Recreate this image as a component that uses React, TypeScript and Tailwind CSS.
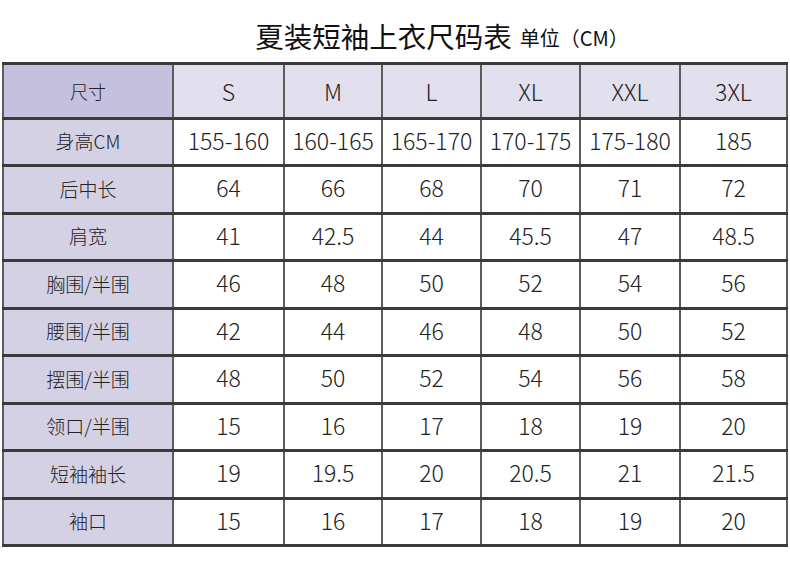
import React from 'react';

const sizes = ['S', 'M', 'L', 'XL', 'XXL', '3XL'];

const rows: [string, string[]][] = [
  ['身高CM', ['155-160', '160-165', '165-170', '170-175', '175-180', '185']],
  ['后中长', ['64', '66', '68', '70', '71', '72']],
  ['肩宽', ['41', '42.5', '44', '45.5', '47', '48.5']],
  ['胸围/半围', ['46', '48', '50', '52', '54', '56']],
  ['腰围/半围', ['42', '44', '46', '48', '50', '52']],
  ['摆围/半围', ['48', '50', '52', '54', '56', '58']],
  ['领口/半围', ['15', '16', '17', '18', '19', '20']],
  ['短袖袖长', ['19', '19.5', '20', '20.5', '21', '21.5']],
  ['袖口', ['15', '16', '17', '18', '19', '20']],
];

const colWidths = ['w-[170px]', 'w-[111px]', 'w-[98px]', 'w-[99px]', 'w-[99px]', 'w-[100px]', 'w-[107px]'];

export default function App() {
  return (
    <div
      className="w-[790px] h-[564px] bg-white text-[#222]"
      style={{ fontFamily: '"Noto Sans CJK SC", "Noto Sans", sans-serif' }}
    >
      {/* Title */}
      <div className="h-[62px] flex items-center justify-center pt-[10px] pl-[94px]">
        <span className="text-[28.5px] font-normal text-[#111]">夏装短袖上衣尺码表</span>
        <span className="text-[20px] ml-[8px] mt-[4px] text-[#111]">单位（CM）</span>
      </div>

      <div className="pl-[2px]">
        <table className="border-collapse table-fixed w-[786px]">
          <colgroup>
            {colWidths.map((w, i) => (
              <col key={i} className={w} />
            ))}
          </colgroup>
          <thead>
            <tr className="h-[55px]">
              <th className="bg-[#c5c0dd] border-y-[3px] border-y-[#3b3b3b] border-x-2 border-x-[#5c5c5c] text-[18px] font-light">
                尺寸
              </th>
              {sizes.map((s) => (
                <th
                  key={s}
                  className="bg-[#e2dfee] border-y-[3px] border-y-[#3b3b3b] border-x-2 border-x-[#5c5c5c] text-[23px] font-light"
                >
                  {s}
                </th>
              ))}
            </tr>
          </thead>
          <tbody>
            {rows.map(([label, vals], ri) => (
              <tr key={label} className={ri % 2 === 0 ? 'h-[47px]' : 'h-[48px]'}>
                <td className="bg-[#d4d1e5] border-y-[3px] border-y-[#3b3b3b] border-x-2 border-x-[#5c5c5c] text-center text-[19px] font-light leading-none pb-[3px]">
                  {label}
                </td>
                {vals.map((v, i) => (
                  <td
                    key={i}
                    className="bg-white border-y-[3px] border-y-[#3b3b3b] border-x-2 border-x-[#5c5c5c] text-center text-[23px] font-light leading-none pb-[4px]"
                  >
                    {v}
                  </td>
                ))}
              </tr>
            ))}
          </tbody>
        </table>
      </div>
    </div>
  );
}
